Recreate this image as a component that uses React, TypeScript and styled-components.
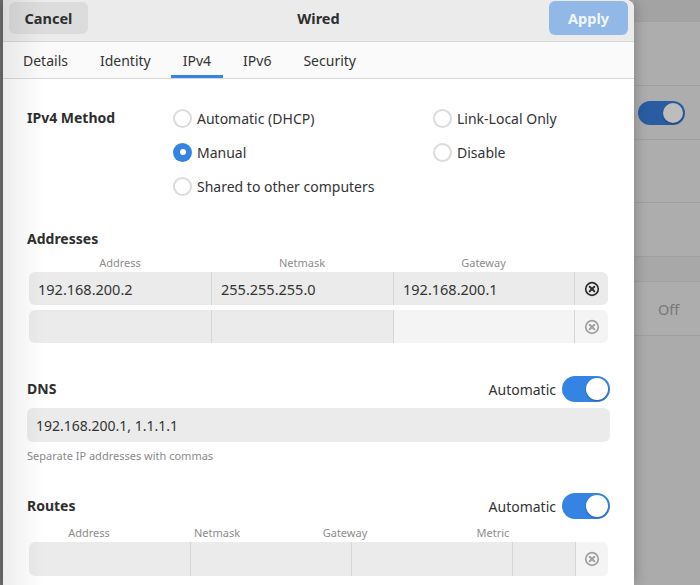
import { FC } from "react";
import styled, { createGlobalStyle } from "styled-components";

const GlobalStyle = createGlobalStyle`
  html, body {
    margin: 0;
    padding: 0;
    height: 100%;
    overflow: hidden;
  }
  body {
    background: #ababab;
    font-family: "Noto Sans", "DejaVu Sans", sans-serif;
    color: #303030;
  }
  * {
    box-sizing: border-box;
  }
`;

const Screen = styled.div`
  display: flex;
  width: 700px;
  height: 585px;
`;

const LeftEdge = styled.div`
  width: 3px;
  background: #6e6e6e;
`;

const Dialog = styled.div`
  position: relative;
  width: 631px;
  display: flex;
  flex-direction: column;
  background: #ffffff;
  border-top-right-radius: 8px;
  box-shadow: 0 0 14px rgba(0, 0, 0, 0.28);
  z-index: 1;
  overflow: hidden;

  &::after {
    content: "";
    position: absolute;
    top: 0;
    left: 0;
    bottom: 0;
    width: 40px;
    background: linear-gradient(to right, rgba(0, 0, 0, 0.07), rgba(0, 0, 0, 0));
    pointer-events: none;
  }
`;

/* ---------- header bar ---------- */

const HeaderBar = styled.header`
  display: grid;
  grid-template-columns: 1fr auto 1fr;
  grid-template-rows: 34px;
  align-items: center;
  height: 42px;
  padding: 1px 6px 0;
  background: #ebebeb;
  border-bottom: 1px solid #d8d8d8;
`;

const HeaderButton = styled.button<{ $primary?: boolean }>`
  justify-self: ${(p) => (p.$primary ? "end" : "start")};
  width: 79px;
  height: ${(p) => (p.$primary ? "34px" : "32px")};
  border: none;
  border-radius: 6px;
  font-family: inherit;
  font-size: 14.5px;
  font-weight: 700;
  background: ${(p) => (p.$primary ? "#92b8e8" : "#dcdcdc")};
  color: ${(p) => (p.$primary ? "#f2f6fc" : "#2e2e2e")};
`;

const Title = styled.h1`
  margin: 0;
  font-size: 14.5px;
  font-weight: 700;
  color: #2e2e2e;
`;

/* ---------- tabs ---------- */

const TabBar = styled.nav`
  display: flex;
  gap: 8px;
  height: 37px;
  padding-left: 8px;
  background: #fafafa;
  border-bottom: 1px solid #d8d8d8;
`;

const Tab = styled.div<{ $active?: boolean }>`
  display: flex;
  align-items: center;
  padding: 3px 12px 0;
  font-size: 14px;
  color: #333;
  border-bottom: 3px solid ${(p) => (p.$active ? "#3584e4" : "transparent")};
`;

/* ---------- content ---------- */

const Content = styled.main`
  display: flex;
  flex-direction: column;
  padding: 22px 24px 0;
`;

const SectionTitle = styled.div`
  font-size: 14px;
  font-weight: 700;
  line-height: 18px;
  color: #2e2e2e;
`;

const MethodGrid = styled.div`
  display: grid;
  grid-template-columns: 146px 260px 1fr;
  grid-auto-rows: 34px;
  align-items: center;
`;

const RadioLabel = styled.label`
  display: flex;
  align-items: center;
  gap: 5px;
  font-size: 14px;
  color: #333;
`;

const RadioCircle = styled.span<{ $checked?: boolean }>`
  position: relative;
  width: 19px;
  height: 19px;
  border-radius: 50%;
  border: ${(p) => (p.$checked ? "none" : "2px solid #dcdcdc")};
  background: ${(p) => (p.$checked ? "#3584e4" : "#ffffff")};

  &::after {
    content: "";
    display: ${(p) => (p.$checked ? "block" : "none")};
    position: absolute;
    left: 6.5px;
    top: 6.5px;
    width: 6px;
    height: 6px;
    border-radius: 50%;
    background: #ffffff;
  }
`;

const Section = styled.section<{ $gap: number }>`
  display: flex;
  flex-direction: column;
  margin-top: ${(p) => p.$gap}px;
`;

const ColumnHeads = styled.div<{ $cols: string; $top: number }>`
  display: grid;
  grid-template-columns: ${(p) => p.$cols};
  margin: ${(p) => p.$top}px 2px 2px;
  font-size: 11px;
  line-height: 14px;
  color: #8c8c8c;
  text-align: center;
`;

const Rows = styled.div`
  display: flex;
  flex-direction: column;
  gap: 5px;
  margin: 0 2px;
`;

const Row = styled.div<{ $cols: string; $height: number }>`
  display: grid;
  grid-template-columns: ${(p) => p.$cols};
  height: ${(p) => p.$height}px;
  border-radius: 6px;
  overflow: hidden;
`;

const Cell = styled.div<{ $light?: boolean }>`
  display: flex;
  align-items: center;
  padding-left: 9px;
  font-size: 14.5px;
  color: #333;
  background: ${(p) => (p.$light ? "#f4f4f4" : "#ebebeb")};
  & + & {
    border-left: 1px solid #d6d6d6;
  }
`;

const DeleteCell = styled(Cell)`
  justify-content: center;
  padding-left: 0;
`;

const SectionHeader = styled.div`
  display: flex;
  align-items: center;
  justify-content: space-between;
  height: 26px;
`;

const SwitchGroup = styled.div`
  display: flex;
  align-items: center;
  gap: 6px;
  font-size: 14px;
  color: #333;
`;

const Switch = styled.span<{ $dim?: boolean }>`
  display: flex;
  justify-content: flex-end;
  align-items: center;
  width: ${(p) => (p.$dim ? "47px" : "48px")};
  height: ${(p) => (p.$dim ? "24px" : "26px")};
  padding: 2px;
  border-radius: 13px;
  background: ${(p) => (p.$dim ? "#2a5ca2" : "#3584e4")};

  &::after {
    content: "";
    width: ${(p) => (p.$dim ? "20px" : "22px")};
    height: ${(p) => (p.$dim ? "20px" : "22px")};
    border-radius: 50%;
    background: ${(p) => (p.$dim ? "#bdbdbd" : "#ffffff")};
    box-shadow: 0 1px 2px rgba(0, 0, 0, 0.3);
  }
`;

const TextField = styled.div`
  display: flex;
  align-items: center;
  height: 34px;
  margin-top: 6px;
  padding-left: 9px;
  border-radius: 6px;
  background: #ebebeb;
  font-size: 14px;
  color: #333;
`;

const Helper = styled.div`
  margin-top: 7px;
  font-size: 11px;
  line-height: 14px;
  color: #8a8a8a;
`;

/* ---------- dimmed window behind ---------- */

const Backdrop = styled.div`
  flex: 1;
  display: flex;
  flex-direction: column;
`;

const BackRow = styled.div<{ $h: number; $tone?: string }>`
  display: flex;
  align-items: center;
  height: ${(p) => p.$h}px;
  padding-left: 4px;
  background: ${(p) => p.$tone || "#adadad"};
  border-bottom: 1px solid #a0a0a0;
`;

const BackText = styled.span`
  margin-left: 20px;
  font-size: 14.5px;
  color: #787878;
`;

const ClearIcon: FC<{ color: string }> = ({ color }) => (
  <svg width="16" height="16" viewBox="0 0 16 16" fill="none">
    <circle cx="8" cy="8" r="6.3" stroke={color} strokeWidth="1.7" />
    <path
      d="M5.7 5.7 L10.3 10.3 M10.3 5.7 L5.7 10.3"
      stroke={color}
      strokeWidth="2"
      strokeLinecap="round"
    />
  </svg>
);

const ADDR_COLS = "182px 182px 181px 1fr";
const ROUTE_COLS = "161px 161px 161px 63px 1fr";

const Radio: FC<{ label: string; checked?: boolean }> = ({ label, checked }) => (
  <RadioLabel>
    <RadioCircle $checked={checked} />
    {label}
  </RadioLabel>
);

export default function App() {
  return (
    <>
      <GlobalStyle />
      <Screen>
        <LeftEdge />
        <Dialog>
          <HeaderBar>
            <HeaderButton>Cancel</HeaderButton>
            <Title>Wired</Title>
            <HeaderButton $primary>Apply</HeaderButton>
          </HeaderBar>

          <TabBar>
            <Tab>Details</Tab>
            <Tab>Identity</Tab>
            <Tab $active>IPv4</Tab>
            <Tab>IPv6</Tab>
            <Tab>Security</Tab>
          </TabBar>

          <Content>
            <MethodGrid>
              <SectionTitle>IPv4 Method</SectionTitle>
              <Radio label="Automatic (DHCP)" />
              <Radio label="Link-Local Only" />
              <span />
              <Radio label="Manual" checked />
              <Radio label="Disable" />
              <span />
              <Radio label="Shared to other computers" />
            </MethodGrid>

            <Section $gap={27}>
              <SectionTitle>Addresses</SectionTitle>
              <ColumnHeads $cols={ADDR_COLS} $top={8}>
                <span>Address</span>
                <span>Netmask</span>
                <span>Gateway</span>
              </ColumnHeads>
              <Rows>
                <Row $cols={ADDR_COLS} $height={33}>
                  <Cell>192.168.200.2</Cell>
                  <Cell>255.255.255.0</Cell>
                  <Cell>192.168.200.1</Cell>
                  <DeleteCell>
                    <ClearIcon color="#2e2e2e" />
                  </DeleteCell>
                </Row>
                <Row $cols={ADDR_COLS} $height={33}>
                  <Cell />
                  <Cell />
                  <Cell $light />
                  <DeleteCell $light>
                    <ClearIcon color="#a0a0a0" />
                  </DeleteCell>
                </Row>
              </Rows>
            </Section>

            <Section $gap={33}>
              <SectionHeader>
                <SectionTitle>DNS</SectionTitle>
                <SwitchGroup>
                  Automatic
                  <Switch />
                </SwitchGroup>
              </SectionHeader>
              <TextField>192.168.200.1, 1.1.1.1</TextField>
              <Helper>Separate IP addresses with commas</Helper>
            </Section>

            <Section $gap={30}>
              <SectionHeader>
                <SectionTitle>Routes</SectionTitle>
                <SwitchGroup>
                  Automatic
                  <Switch />
                </SwitchGroup>
              </SectionHeader>
              <ColumnHeads $cols="120px 136px 120px 176px" $top={7}>
                <span>Address</span>
                <span>Netmask</span>
                <span>Gateway</span>
                <span>Metric</span>
              </ColumnHeads>
              <Rows>
                <Row $cols={ROUTE_COLS} $height={34}>
                  <Cell />
                  <Cell />
                  <Cell />
                  <Cell />
                  <DeleteCell $light>
                    <ClearIcon color="#a0a0a0" />
                  </DeleteCell>
                </Row>
              </Rows>
            </Section>
          </Content>
        </Dialog>

        <Backdrop>
          <BackRow $h={22} $tone="#a3a3a3" />
          <BackRow $h={64} />
          <BackRow $h={54}>
            <Switch $dim />
          </BackRow>
          <BackRow $h={63} />
          <BackRow $h={54} />
          <BackRow $h={25} $tone="#a8a8a8" />
          <BackRow $h={54}>
            <BackText>Off</BackText>
          </BackRow>
        </Backdrop>
      </Screen>
    </>
  );
}
